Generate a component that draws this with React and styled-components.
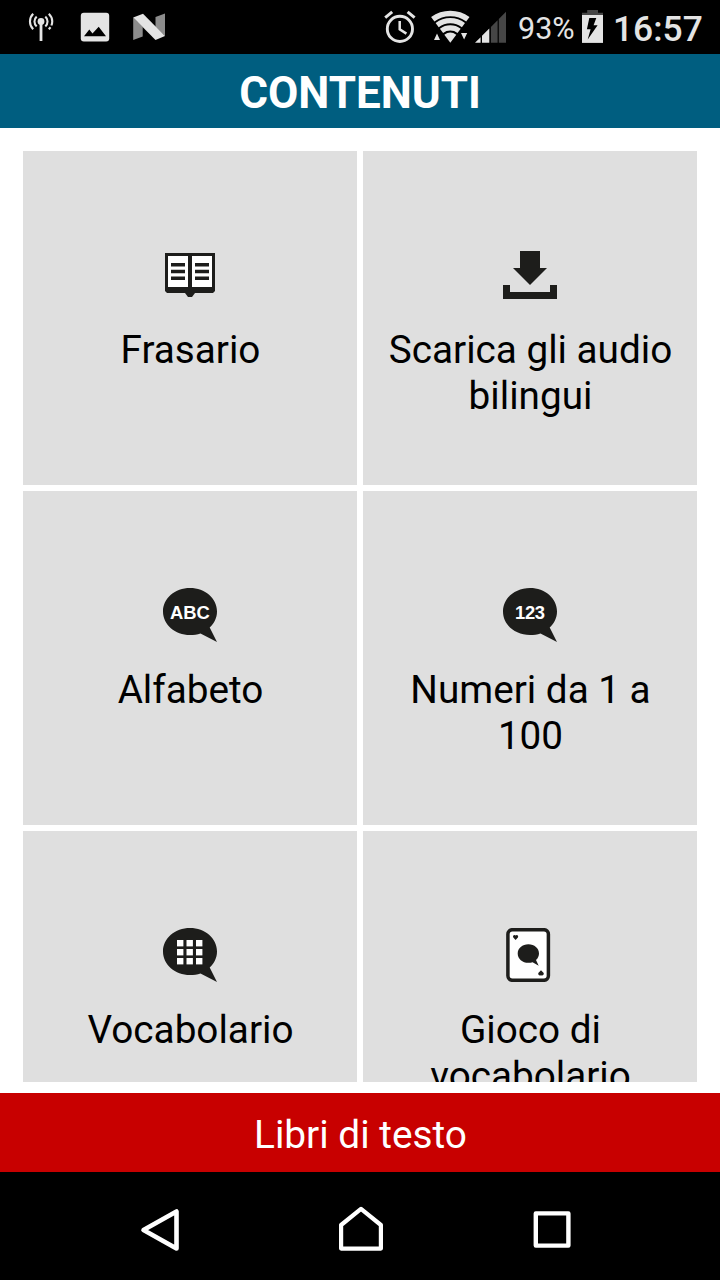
import React from 'react';
import styled, { createGlobalStyle } from 'styled-components';

const INK = '#1d1d1b';
const STATUS = '#e4e4e4';

const GlobalStyle = createGlobalStyle`
  * {
    box-sizing: border-box;
  }
  body {
    margin: 0;
    background: #fff;
    font-family: Roboto, 'Noto Sans', sans-serif;
  }
`;

const Screen = styled.div`
  display: flex;
  flex-direction: column;
  width: 720px;
  height: 1280px;
  overflow: hidden;
  background: #fff;
`;

const StatusBar = styled.div`
  display: flex;
  flex: none;
  justify-content: space-between;
  height: 54px;
  padding: 0 18px 0 28px;
  background: #000;
  color: ${STATUS};
`;

const StatusGroup = styled.div`
  display: flex;
  align-items: flex-start;
`;

const StatusIcon = styled.svg`
  display: block;
  flex: none;
  width: ${(props) => props.$width}px;
  height: 54px;
  margin-left: ${(props) => props.$gap || 0}px;
`;

const StatusText = styled.span`
  width: ${(props) => props.$width}px;
  margin-left: ${(props) => props.$gap}px;
  font-size: ${(props) => props.$size}px;
  font-weight: ${(props) => props.$weight};
  line-height: ${(props) => props.$line}px;
  white-space: nowrap;
`;

const Header = styled.h1`
  flex: none;
  height: 74px;
  margin: 0;
  background: #005e80;
  color: #fff;
  font-size: 44px;
  font-weight: 700;
  line-height: 79px;
  text-align: center;
`;

const Content = styled.main`
  flex: none;
  height: 965px;
  padding: 23px 23px 11px;
`;

const Grid = styled.div`
  display: grid;
  grid-template-columns: repeat(2, 334px);
  grid-auto-rows: 334px;
  gap: 6px;
  height: 931px;
  overflow: hidden;
`;

const Tile = styled.div`
  display: flex;
  flex-direction: column;
  align-items: center;
  padding: 97px 20px 0;
  background: #dfdfdf;
`;

const TileIcon = styled.svg`
  display: block;
  flex: none;
  width: 54px;
  height: 54px;
`;

const TileLabel = styled.div`
  margin-top: 25px;
  padding-left: 1px;
  color: #000;
  font-size: 38.7px;
  line-height: 46px;
  text-align: center;
`;

const BubbleText = styled.text`
  font-family: 'Liberation Sans', Arial, sans-serif;
  font-size: 18.4px;
  font-weight: 700;
  fill: #fff;
`;

const BooksButton = styled.div`
  flex: none;
  height: 79px;
  padding-left: 1px;
  background: #c80000;
  color: #fff;
  font-size: 38.8px;
  line-height: 84px;
  text-align: center;
`;

const NavBar = styled.nav`
  display: flex;
  flex: none;
  height: 108px;
  padding: 34px 0 0 138px;
  background: #000;
`;

const NavIcon = styled.svg`
  display: block;
  flex: none;
  width: 46px;
  height: 46px;
  margin-left: ${(props) => props.$gap || 0}px;
  fill: none;
  stroke: #fff;
  stroke-width: ${(props) => props.$stroke};
  stroke-linejoin: round;
`;

const Bubble = ({ children }) => (
  <TileIcon viewBox="0 0 54 54">
    <path
      d="M27 0C42 0 54 10.300 54 23.500C54 30 51 35.500 46.700 39.600L54 54L37.500 45.400C34.300 46.500 30.800 47 27 47C12 47 0 36.700 0 23.500C0 10.300 12 0 27 0Z"
      fill={INK}
    />
    {children}
  </TileIcon>
);

const BookIcon = () => (
  <TileIcon viewBox="0 0 54 54">
    <path d="M2 5H52V43L50 45H32L29 49H25L22 45H4L2 43Z" fill={INK} />
    <path d="M5 8H25V39H5ZM29 8H49V39H29Z" fill="#fff" />
    <path
      d="M8 16.800H22M8 23.500H22M8 30.300H22M32 16.800H46M32 23.500H46M32 30.300H46"
      stroke={INK}
      strokeWidth="3.400"
    />
  </TileIcon>
);

const DownloadIcon = () => (
  <TileIcon viewBox="0 0 54 54">
    <path d="M17 3H37V20H44L27 37L10 20H17Z" fill={INK} />
    <path d="M0 37H7V44H47V37H54V51H0Z" fill={INK} />
  </TileIcon>
);

const AbcIcon = () => (
  <Bubble>
    <BubbleText x="26.900" y="31" textAnchor="middle">
      ABC
    </BubbleText>
  </Bubble>
);

const NumbersIcon = () => (
  <Bubble>
    <BubbleText x="27" y="31" textAnchor="middle" textLength="30">
      123
    </BubbleText>
  </Bubble>
);

const VocabularyIcon = () => (
  <Bubble>
    {[12, 21, 30].map((y) =>
      [14, 23.5, 33].map((x) => (
        <rect key={`${x}-${y}`} x={x} y={y} width="6.400" height="6.400" fill="#fff" />
      )),
    )}
  </Bubble>
);

const CardIcon = () => (
  <TileIcon viewBox="0 0 54 54">
    <rect x="4.900" y="1.700" width="40.500" height="50.600" rx="4.500" fill="#fff" stroke={INK} strokeWidth="3.500" />
    <path
      d="M25.400 16.200C31.400 16.200 36 20.200 36 25.400C36 28 34.900 30.200 33 31.900L35.700 37.700L29.600 34.200C28.300 34.600 26.900 34.800 25.400 34.800C19.400 34.800 14.700 30.600 14.700 25.400C14.700 20.200 19.400 16.200 25.400 16.200Z"
      fill={INK}
    />
    <path
      d="M12.600 12L10.300 9.500C9.200 7.800 11.400 6 12.600 7.600C13.800 6 16 7.800 14.900 9.500Z"
      fill={INK}
    />
    <path
      d="M38 42.300L40.500 44.800C41.600 46.600 39.700 48 38 47.200C36.300 48 34.400 46.600 35.500 44.800Z"
      fill={INK}
    />
  </TileIcon>
);

const tiles = [
  { label: 'Frasario', Icon: BookIcon },
  { label: 'Scarica gli audio bilingui', Icon: DownloadIcon },
  { label: 'Alfabeto', Icon: AbcIcon },
  { label: 'Numeri da 1 a 100', Icon: NumbersIcon },
  { label: 'Vocabolario', Icon: VocabularyIcon },
  { label: 'Gioco di vocabolario', Icon: CardIcon },
];

const AntennaIcon = () => (
  <StatusIcon $width={26} viewBox="0 0 26 54">
    <circle cx="13" cy="21.500" r="3.400" fill={STATUS} />
    <path d="M13 22V41" stroke={STATUS} strokeWidth="2.800" />
    <path
      d="M8.700 16.600A6.500 6.500 0 0 0 8.700 26.400M17.300 16.600A6.500 6.500 0 0 1 17.300 26.400M5.200 13.700A11 11 0 0 0 5.200 29.300M20.800 13.700A11 11 0 0 1 23.400 25.500M22.600 27.200L20.800 29.300"
      fill="none"
      stroke={STATUS}
      strokeWidth="2.100"
    />
  </StatusIcon>
);

const PictureIcon = () => (
  <StatusIcon $width={30} $gap={26} viewBox="0 0 30 54">
    <rect x="0.800" y="12.800" width="28.400" height="28.600" rx="3" fill={STATUS} />
    <path d="M4 36.300L9.300 29.600L12.500 33.500L18.700 26.800L26 36.300Z" fill="#000" />
  </StatusIcon>
);

const NougatIcon = () => (
  <StatusIcon $width={32} $gap={23} viewBox="0 0 32 54">
    <path d="M0.200 17.500L9.700 27V36.600L0.200 40ZM22.500 17L32 13.600V36L22.500 27Z" fill="#8c8c8c" />
    <path d="M0.200 17.500L10 13.700L32 36L22.500 40Z" fill={STATUS} />
  </StatusIcon>
);

const AlarmIcon = () => (
  <StatusIcon $width={32} viewBox="0 0 32 54">
    <g fill="none" stroke={STATUS}>
      <circle cx="15.900" cy="28.900" r="12.600" strokeWidth="2.900" />
      <path d="M15.700 21V29.400L22.400 33.600" strokeWidth="2.500" />
      <path d="M1.200 17.600L8.200 11.900M23.600 11.900L30.600 17.600" strokeWidth="3" />
    </g>
  </StatusIcon>
);

// radii share the apex at the bottom, so every band ends on the same two edges
const WifiIcon = () => (
  <StatusIcon $width={40} $gap={14} viewBox="0 0 40 54">
    <g fill={STATUS}>
      <path d="M1.100 17.100A32 32 0 0 1 39.500 17.100L36.200 21.500A26.500 26.500 0 0 0 4.400 21.500Z" />
      <path d="M5.600 23A24.600 24.600 0 0 1 35 23L31.900 27.200A19.400 19.400 0 0 0 8.700 27.200Z" />
      <path d="M9.900 28.800A17.400 17.400 0 0 1 30.700 28.800L27.500 33A12 12 0 0 0 13.100 33Z" />
      <path d="M14.300 34.700A10 10 0 0 1 26.300 34.700L20.300 42.700Z" />
      <path d="M4 40L7 33.500L10 40ZM31 33L37.200 33L34.100 39.500Z" />
    </g>
  </StatusIcon>
);

const SignalIcon = () => (
  <StatusIcon $width={31} $gap={5} viewBox="0 0 31 54">
    <path d="M0 42.800L5.600 37.200V42.800ZM7 35.800L14.300 28.500V42.800H7Z" fill={STATUS} />
    <path d="M15.900 26.900L22.600 20.200V42.800H15.900ZM23.800 19L31 11.800V42.800H23.800Z" fill="#464646" />
  </StatusIcon>
);

const BatteryIcon = () => (
  <StatusIcon $width={21} $gap={8} viewBox="0 0 21 54">
    <path d="M5.200 10H16V12.700H21V15H0V12.700H5.200Z" fill="#464646" />
    <rect y="15" width="21" height="27.900" fill={STATUS} />
    <path d="M7.300 18H14.300L11.600 25.300H15.600L5.700 39.500L8.600 29.300H4.900Z" fill="#000" />
  </StatusIcon>
);

const App = () => {
  return (
    <>
      <GlobalStyle />
      <Screen>
        <StatusBar>
          <StatusGroup>
            <AntennaIcon />
            <PictureIcon />
            <NougatIcon />
          </StatusGroup>
          <StatusGroup>
            <AlarmIcon />
            <WifiIcon />
            <SignalIcon />
            <StatusText $width={56} $gap={12} $size={30.5} $weight={400} $line={58}>
              93%
            </StatusText>
            <BatteryIcon />
            <StatusText $width={89} $gap={10} $size={35.4} $weight={500} $line={58}>
              16:57
            </StatusText>
          </StatusGroup>
        </StatusBar>
        <Header>CONTENUTI</Header>
        <Content>
          <Grid>
            {tiles.map(({ label, Icon }) => (
              <Tile key={label}>
                <Icon />
                <TileLabel>{label}</TileLabel>
              </Tile>
            ))}
          </Grid>
        </Content>
        <BooksButton>Libri di testo</BooksButton>
        <NavBar>
          <NavIcon $stroke={4.6} viewBox="0 0 46 46">
            <path d="M5.500 24L38.500 5.500V42.500Z" />
          </NavIcon>
          <NavIcon $gap={154} $stroke={4.2} viewBox="0 0 46 46">
            <path d="M3.100 42.600V19L23 2.900L42.900 19V42.600Z" />
          </NavIcon>
          <NavIcon $gap={144} $stroke={4.4} viewBox="0 0 46 46">
            <rect x="7.800" y="7.400" width="32.600" height="32.200" />
          </NavIcon>
        </NavBar>
      </Screen>
    </>
  );
};

export default App;
